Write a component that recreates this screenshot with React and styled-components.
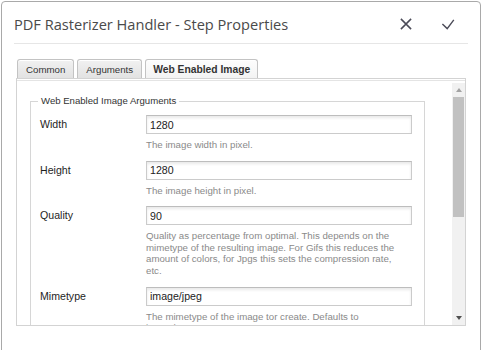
import React from "react";
import styled, { createGlobalStyle } from "styled-components";

const GlobalStyle = createGlobalStyle`
  html, body { margin: 0; padding: 0; background: #ffffff; }
  body { font-family: "Liberation Sans", Arial, sans-serif; overflow: hidden; }
  #root { width: 481px; height: 350px; overflow: hidden; }
`;

const Dialog = styled.div`
  box-sizing: border-box;
  margin: 1px 0 0 1px;
  width: 480px;
  height: 370px;
  border: 1px solid #a9a9a9;
  border-radius: 4px;
  background: #fff;
  padding: 0 12px;
`;

const Header = styled.div`
  box-sizing: border-box;
  height: 42px;
  padding: 3px 8px 0 0;
  border-bottom: 1px solid #e6e6e6;
  display: flex;
  align-items: center;
`;

const Title = styled.h1`
  flex: 1;
  margin: 0;
  font-family: "Open Sans", "Noto Sans", sans-serif;
  font-weight: 400;
  font-size: 14.6px;
  color: #4a4a4a;
`;

const Actions = styled.div`
  display: flex;
  gap: 18px;
`;

const IconButton = styled.button`
  width: 24px;
  height: 24px;
  padding: 0;
  border: 0;
  background: transparent;
  display: flex;
  align-items: center;
  justify-content: center;
  color: #4b4b58;
  svg { display: block; }
`;

const Body = styled.div`
  padding: 15px 0 0 2px;
`;

const Tabs = styled.div`
  display: flex;
  gap: 3px;
  padding-left: 1px;
  height: 19px;
`;

const Tab = styled.div`
  box-sizing: border-box;
  height: 19px;
  padding: 0 ${(p) => (p.$active ? "7px" : "8px")};
  border: 1px solid #c3c3c3;
  border-bottom: 0;
  border-radius: 3px 3px 0 0;
  display: flex;
  align-items: center;
  font-size: ${(p) => (p.$active ? "10.3px" : "9.7px")};
  font-weight: ${(p) => (p.$active ? 700 : 400)};
  color: #333;
  background: ${(p) =>
    p.$active
      ? "linear-gradient(#fdfdfd, #f3f3f3)"
      : "linear-gradient(#f1f1f1, #e2e2e2)"};
  box-shadow: inset 0 1px 0 #fff;
`;

const Panel = styled.div`
  box-sizing: border-box;
  width: 450px;
  height: 248px;
  border: 1px solid #d3d3d3;
  box-shadow: inset 0 1px 0 #fff, inset 0 2px 0 #e4e4e4;
  background: #fff;
  display: flex;
  flex-direction: column;
`;

const PanelInner = styled.div`
  margin-top: 4px;
  flex: 1;
  display: flex;
  min-height: 0;
`;

const Content = styled.div`
  flex: 1;
  overflow: hidden;
  padding: 12px 27px 0 13px;
`;

const Fieldset = styled.fieldset`
  margin: 0;
  min-width: 0;
  border: 1px solid #d6d6d6;
  padding: 8px 12px 0 9px;
`;

const Legend = styled.legend`
  margin-left: -2px;
  padding: 0 3px;
  font-size: 9.6px;
  line-height: 12px;
  color: #333;
`;

const Row = styled.div`
  display: grid;
  grid-template-columns: 106px 1fr;
  margin-bottom: 10px;
`;

const Label = styled.label`
  height: 19px;
  line-height: 19px;
  font-size: 10.6px;
  color: #1e1e1e;
`;

const Field = styled.div`
  display: flex;
  flex-direction: column;
`;

const Input = styled.input`
  box-sizing: border-box;
  width: 100%;
  height: 19px;
  margin: 0;
  padding: 0 3px;
  border: 1px solid #cbcbcb;
  border-top-color: #bdbdbd;
  box-shadow: inset 0 2px 3px rgba(0, 0, 0, 0.09);
  background: #fff;
  font-family: "Liberation Sans", Arial, sans-serif;
  font-size: 10.6px;
  color: #222;
  outline: none;
`;

const Help = styled.div`
  margin-top: 5px;
  font-size: 9.7px;
  line-height: 11.6px;
  color: #8a8a8a;
  white-space: pre-line;
`;

const Scrollbar = styled.div`
  width: 13px;
  background: #f1f1f1;
  display: flex;
  flex-direction: column;
`;

const ArrowButton = styled.div`
  height: 14px;
  display: flex;
  align-items: center;
  justify-content: center;
  &::before {
    content: "";
    width: 0;
    height: 0;
    border-left: 3.5px solid transparent;
    border-right: 3.5px solid transparent;
    ${(p) =>
      p.$down
        ? "border-top: 4px solid #505050;"
        : "border-bottom: 4px solid #a3a3a3;"}
  }
`;

const Thumb = styled.div`
  height: 120px;
  margin: 0 1px;
  background: #c1c1c1;
`;

const TrackSpace = styled.div`
  flex: 1;
`;

const fields = [
  { label: "Width", value: "1280", help: "The image width in pixel." },
  { label: "Height", value: "1280", help: "The image height in pixel." },
  {
    label: "Quality",
    value: "90",
    help:
      "Quality as percentage from optimal. This depends on the\nmimetype of the resulting image. For Gifs this reduces the\namount of colors, for Jpgs this sets the compression rate,\netc.",
  },
  {
    label: "Mimetype",
    value: "image/jpeg",
    help: "The mimetype of the image tor create. Defaults to\nimage/png.",
  },
];

export default function App() {
  return (
    <>
      <GlobalStyle />
      <Dialog>
        <Header>
          <Title>PDF Rasterizer Handler - Step Properties</Title>
          <Actions>
            <IconButton aria-label="Cancel">
              <svg width="24" height="24" viewBox="0 0 24 24">
                <path
                  d="M6.9 6.9 L17.1 17.1 M17.1 6.9 L6.9 17.1"
                  stroke="currentColor"
                  strokeWidth="1.5"
                  fill="none"
                />
              </svg>
            </IconButton>
            <IconButton aria-label="Done">
              <svg width="24" height="24" viewBox="0 0 24 24">
                <path
                  d="M6.4 12 L11.2 16.6 L17.8 7.8"
                  stroke="currentColor"
                  strokeWidth="1.4"
                  fill="none"
                />
              </svg>
            </IconButton>
          </Actions>
        </Header>
        <Body>
          <Tabs>
            <Tab>Common</Tab>
            <Tab>Arguments</Tab>
            <Tab $active>Web Enabled Image</Tab>
          </Tabs>
          <Panel>
            <PanelInner>
              <Content>
                <Fieldset>
                  <Legend>Web Enabled Image Arguments</Legend>
                  {fields.map((f) => (
                    <Row key={f.label}>
                      <Label>{f.label}</Label>
                      <Field>
                        <Input defaultValue={f.value} />
                        <Help>{f.help}</Help>
                      </Field>
                    </Row>
                  ))}
                </Fieldset>
              </Content>
              <Scrollbar>
                <ArrowButton />
                <Thumb />
                <TrackSpace />
                <ArrowButton $down />
              </Scrollbar>
            </PanelInner>
          </Panel>
        </Body>
      </Dialog>
    </>
  );
}
